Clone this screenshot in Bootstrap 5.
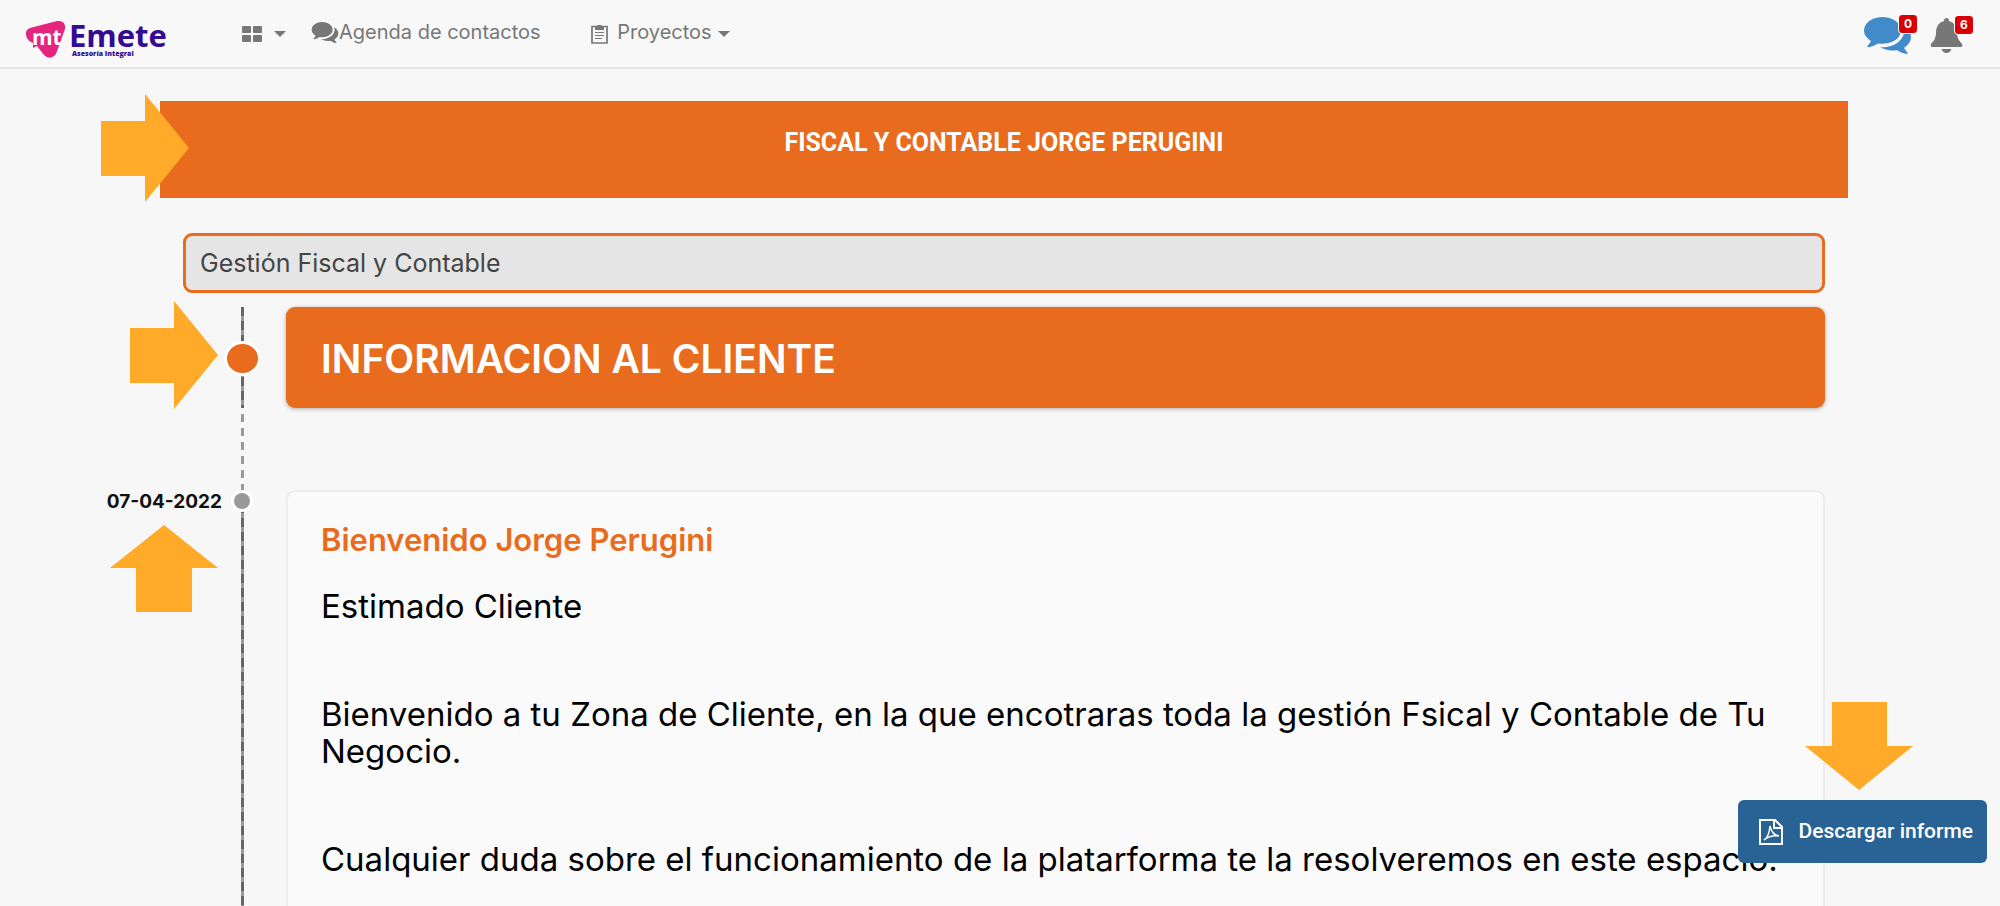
<!DOCTYPE html>
<html lang="es">
<head>
<meta charset="utf-8">
<meta name="viewport" content="width=device-width, initial-scale=1">
<title>Emete - Gestión Fiscal y Contable</title>
<link rel="stylesheet" href="https://cdn.jsdelivr.net/npm/bootstrap@5.3.0/dist/css/bootstrap.min.css">
<style>
:root { --orange: #e96b1d; --arrow: #ffaa28; --page: #f7f7f7; }
body { background: var(--page); font-family: Inter, "Open Sans", sans-serif; color: #000; }
.topbar { background: #f8f8f8; border-bottom: 2px solid #e5e5e5; min-height: 69px; padding: 0 24px; }
.logo { width: 144px; height: 42px; margin-top: 8px; }
.menu { margin-left: 66px; padding-bottom: 3px; }
.menu .nav-link { color: #777; font-size: 20px; line-height: 28px; padding: 0; }
.menu .dropdown-toggle::after { margin-left: 6px; border-width: 6px 6px 0; vertical-align: 2px; }
.menu .apps::after { margin-left: 12px; }
.menu .contacts { margin-left: 9px; }
.menu .projects { margin-left: 34px; }
.alerts { gap: 18px; margin-right: 13px; padding-top: 4px; }
.alerts .btn { line-height: 1; border: 0; }
.count { top: -3px; width: 20px; height: 20px; right: -6px; background: #d80005; border: 1px solid #fff; border-radius: 4px; color: #fff; font-size: 12px; font-weight: 700; line-height: 18px; text-align: center; }
.bell .count { right: -11px; }
.page { margin: 32px 152px 0 160px; }
.banner { background: var(--orange); padding: 25px 16px 39px; }
.banner h1 { font: 700 25px/33px Roboto, sans-serif; color: #fff; }
.inner { padding: 35px 23px 0; }
.service { background: #e5e5e5; border: 3px solid var(--orange); border-radius: 9px; padding: 11px 14px; font-size: 25px; line-height: 32px; color: #444; }
.service:focus { background: #e5e5e5; border-color: var(--orange); box-shadow: none; }
.lead-row { margin-top: 14px; }
.arrow { fill: var(--arrow); position: absolute; z-index: 2; }
.a-banner { left: -59px; top: -7px; }
.a-head { left: -53px; top: -6px; }
.a-date { left: -73px; top: 35px; }
.a-down { right: 87px; bottom: 116px; }
.rail { width: 103px; flex: none; }
.track { position: absolute; left: 58px; top: 0; bottom: 0; width: 3px; background: repeating-linear-gradient(#666 0 9px, #999 9px 14px); }
.track.gap { background: repeating-linear-gradient(transparent 0 6px, #999 6px 14px); }
.dot { position: absolute; border: 3px solid #fff; border-radius: 50%; box-sizing: content-box; }
.dot-lg { width: 31px; height: 29px; left: 41px; top: 34px; background: var(--orange); }
.dot-sm { width: 16px; height: 16px; left: 48px; top: 0; background: #999; }
.date { position: absolute; right: 64px; top: 0; font-size: 19px; line-height: 24px; font-weight: 700; color: #111; white-space: nowrap; }
.spacer { height: 82px; }
.section-head { background: var(--orange); border-radius: 9px; padding: 28px 35px 25px; box-shadow: 0 1px 4px rgba(0,0,0,.3); }
.section-head h2 { color: #fff; font-size: 39px; line-height: 48px; font-weight: 600; }
.entry { background: #fafafa; border: 2px solid #ececec; border-bottom: 0; border-radius: 9px 9px 0 0; padding: 29px 24px 16px 33px; font-size: 33px; line-height: 37px; }
.entry h3 { color: var(--orange); font-size: 31px; line-height: 37px; font-weight: 600; margin-bottom: 30px; }
.entry p { margin-bottom: 71px; }
.fab { right: 13px; bottom: 43px; z-index: 3; background: #296396; color: #fff; border: 0; border-radius: 6px; padding: 15px 14px 15px 21px; font: 500 21px/33px Roboto, sans-serif; }
.fab:hover { background: #20507a; color: #fff; }
</style>
</head>
<body class="d-flex flex-column min-vh-100">
<svg class="d-none" aria-hidden="true">
  <symbol id="comments" viewBox="0 256 1792 1410"><path d="M1408 768q0 139-94 257t-256.500 186.500-353.500 68.500q-86 0-176-16-124 88-278 128-36 9-86 16h-3q-11 0-20.500-8t-11.500-21q-1-3-1-6.500t.5-6.500 2-6l2.500-5 3.500-5.500 4-5 4.500-5 4-4.500q5-6 23-25t26-29.500 22.500-29 25-38.500 20.500-44q-124-72-195-177t-71-224q0-139 94-257t256.500-186.500 353.500-68.500 353.500 68.500 256.500 186.500 94 257zm384 256q0 120-71 224.500t-195 176.500q10 24 20.500 44t25 38.500 22.500 29 26 29.500 23 25q1 1 4 4.500t4.500 5 4 5 3.500 5.500l2.500 5 2 6 .5 6.500-1 6.500q-3 14-13 22t-22 7q-50-7-86-16-154-40-278-128-90 16-176 16-271 0-472-132 58 4 88 4 161 0 309-45t264-129q125-92 192-212t67-254q0-77-23-152 129 71 204 178t75 230z"/></symbol>
  <symbol id="arrow-right" viewBox="0 0 88 108"><path d="M0 27H44V0L88 54L44 108V82H0Z"/></symbol>
  <symbol id="arrow-up" viewBox="0 0 108 87"><path d="M54 0L108 43H82V87H26V43H0Z"/></symbol>
</svg>

<nav class="topbar navbar navbar-expand flex-nowrap">
  <a href="#" class="logo d-block" aria-label="Emete Asesoría Integral">
    <svg class="d-block overflow-visible" width="144" height="42" viewBox="24 18 144 42">
      <path d="M30 29Q25 31 26 36Q27 42 33 44V49L37 47L44 56Q50 62 56 55L65 30Q66 21 57 22Z" fill="#e5247e"/>
      <text x="32" y="46" font-family="Open Sans, sans-serif" font-size="21" font-weight="700" fill="#fff">mt</text>
      <text x="69" y="48" font-family="Open Sans, sans-serif" font-size="31" font-weight="700" fill="#330a93">Emete</text>
      <text x="72" y="57" font-family="Open Sans, sans-serif" font-size="7" font-weight="800" fill="#330a93">Asesoría Integral</text>
    </svg>
  </a>
  <ul class="menu navbar-nav align-items-center">
    <li class="nav-item dropdown"><a class="nav-link dropdown-toggle apps" href="#" aria-label="Aplicaciones"><svg width="20" height="16" viewBox="0 0 20 16" fill="#777"><rect width="9" height="7" rx="1"/><rect x="11" width="9" height="7" rx="1"/><rect y="9" width="9" height="7" rx="1"/><rect x="11" y="9" width="9" height="7" rx="1"/></svg></a></li>
    <li class="nav-item contacts"><a class="nav-link d-flex align-items-center" href="#"><svg width="28" height="21" fill="#777"><use href="#comments"/></svg><span>Agenda de contactos</span></a></li>
    <li class="nav-item dropdown projects"><a class="nav-link dropdown-toggle" href="#"><svg class="me-1" width="17" height="20" viewBox="0 0 17 20" fill="none" stroke="#777"><path d="M1 2.500H16V19H1Z" stroke-width="1.700"/><path d="M4 3H6.500V1H10.500V3H13V6H4Z" fill="#777" stroke="none"/><path d="M4 8.500H13M4 11.500H13M4 14.500H11"/></svg> Proyectos</a></li>
  </ul>
  <div class="alerts d-flex ms-auto align-items-center">
    <button type="button" class="btn p-0 position-relative" aria-label="Mensajes"><svg width="49" height="37" fill="#428bca"><use href="#comments"/></svg><span class="count position-absolute">0</span></button>
    <button type="button" class="bell btn p-0 position-relative" aria-label="Avisos"><svg width="33" height="36" viewBox="0 0 33 36" fill="#777"><path d="M14 3Q14 0 16.500 0T19 3Q27 5 27 15Q27 21 32 26Q33 29 31 29H2Q0 29 1 26Q6 21 6 15Q6 5 14 3ZM11.500 31H21.500Q20 35 16.500 35T11.500 31Z"/></svg><span class="count position-absolute">6</span></button>
  </div>
</nav>

<main class="page d-flex flex-column flex-grow-1">
  <header class="banner text-center position-relative">
    <svg class="arrow a-banner" width="88" height="108"><use href="#arrow-right"/></svg>
    <h1 class="m-0">FISCAL Y CONTABLE JORGE PERUGINI</h1>
  </header>
  <div class="inner d-flex flex-column flex-grow-1">
    <input class="service form-control" type="text" aria-label="Servicio" value="Gestión Fiscal y Contable" readonly>
    <section class="lead-row d-flex">
      <div class="rail position-relative">
        <svg class="arrow a-head" width="88" height="108"><use href="#arrow-right"/></svg>
        <div class="track"></div><div class="dot dot-lg"></div>
      </div>
      <div class="section-head flex-grow-1"><h2 class="m-0">INFORMACION AL CLIENTE</h2></div>
    </section>
    <div class="spacer rail position-relative"><div class="track gap"></div></div>
    <section class="d-flex flex-grow-1">
      <div class="rail position-relative">
        <div class="track"></div><div class="dot dot-sm"></div>
        <time class="date" datetime="2022-04-07">07-04-2022</time>
        <svg class="arrow a-date" width="108" height="87"><use href="#arrow-up"/></svg>
      </div>
      <article class="entry flex-grow-1">
        <h3>Bienvenido Jorge Perugini</h3>
        <p>Estimado Cliente</p>
        <p>Bienvenido a tu Zona de Cliente, en la que encotraras toda la gestión Fsical y Contable de Tu Negocio.</p>
        <p class="mb-0">Cualquier duda sobre el funcionamiento de la platarforma te la resolveremos en este espacio.</p>
      </article>
    </section>
  </div>
</main>

<div class="position-fixed bottom-0 end-0">
  <svg class="arrow a-down" width="108" height="88" viewBox="0 0 108 88"><path d="M27 0H82V44H108L54 88L0 44H27Z"/></svg>
</div>
<button type="button" class="fab btn position-fixed d-flex align-items-center gap-3"><svg width="24" height="26" viewBox="0 0 24 26" fill="none" stroke="#fff" stroke-width="2"><path d="M1 1H16L23 8V25H1ZM15 1V9H23"/><path d="M5 21Q10 18 11 7Q13 16 20 17Q11 16 5 21Z" stroke-width="1.500"/></svg>Descargar informe</button>
<script src="https://cdn.jsdelivr.net/npm/bootstrap@5.3.0/dist/js/bootstrap.bundle.min.js"></script>
</body>
</html>
